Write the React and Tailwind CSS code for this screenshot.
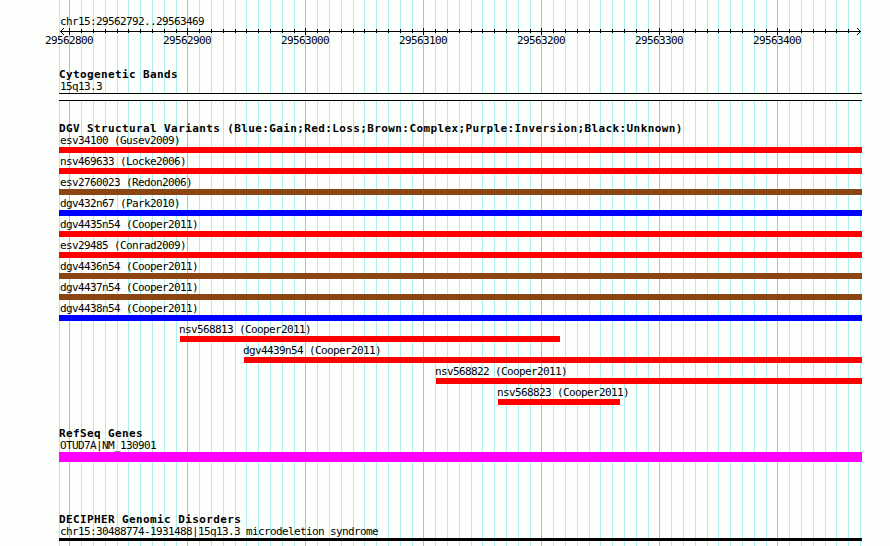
import React from "react";

const LEFT = 59;
const AXIS_Y = 31;

const MAJOR = [69, 187, 305, 423, 541, 659, 777];
const MINOR_OFFSETS = [12, 24, 36, 48, 59, 71, 83, 95, 107];
const MINOR = MAJOR.flatMap((x) => MINOR_OFFSETS.map((o) => x + o)).filter((x) => x <= 860);

const POSITIONS = ["29562800", "29562900", "29563000", "29563100", "29563200", "29563300", "29563400"];

const VARIANTS = [
  { name: "esv34100 (Gusev2009)", start: 59, end: 862, color: "bg-[#ff0000]" },
  { name: "nsv469633 (Locke2006)", start: 59, end: 862, color: "bg-[#ff0000]" },
  { name: "esv2760023 (Redon2006)", start: 59, end: 862, color: "bg-[#8b4513]" },
  { name: "dgv432n67 (Park2010)", start: 59, end: 862, color: "bg-[#0000ff]" },
  { name: "dgv4435n54 (Cooper2011)", start: 59, end: 862, color: "bg-[#ff0000]" },
  { name: "esv29485 (Conrad2009)", start: 59, end: 862, color: "bg-[#ff0000]" },
  { name: "dgv4436n54 (Cooper2011)", start: 59, end: 862, color: "bg-[#8b4513]" },
  { name: "dgv4437n54 (Cooper2011)", start: 59, end: 862, color: "bg-[#8b4513]" },
  { name: "dgv4438n54 (Cooper2011)", start: 59, end: 862, color: "bg-[#0000ff]" },
  { name: "nsv568813 (Cooper2011)", start: 180, end: 560, color: "bg-[#ff0000]" },
  { name: "dgv4439n54 (Cooper2011)", start: 244, end: 862, color: "bg-[#ff0000]" },
  { name: "nsv568822 (Cooper2011)", start: 436, end: 862, color: "bg-[#ff0000]" },
  { name: "nsv568823 (Cooper2011)", start: 498, end: 620, color: "bg-[#ff0000]" },
];

/* ---- Grid lines behind every track ---- */
const Grid = () => (
  <svg className="absolute inset-0" width="890" height="546" shapeRendering="crispEdges">
    {[LEFT, ...MINOR].map((x) => (
      <rect key={x} x={x} y="0" width="1" height="546" fill="#afeeee" />
    ))}
    {MAJOR.map((x) => (
      <rect key={x} x={x} y="0" width="1" height="546" fill="#87ceeb" />
    ))}
  </svg>
);

/* ---- Ruler with arrows and ticks ---- */
const Ruler = () => (
  <svg className="absolute inset-0" width="890" height="40" shapeRendering="crispEdges">
    <rect x="60" y={AXIS_Y} width="801" height="1" />
    {MINOR.filter((x) => x < 860).map((x) => (
      <rect key={x} x={x} y={AXIS_Y - 2} width="1" height="4" />
    ))}
    {MAJOR.map((x) => (
      <rect key={x} x={x} y={AXIS_Y - 3} width="1" height="7" />
    ))}
    {[1, 2, 3].map((i) => (
      <g key={i}>
        <rect x={60 + i} y={AXIS_Y - i} width="1" height="1" />
        <rect x={60 + i} y={AXIS_Y + i} width="1" height="1" />
        <rect x={860 - i} y={AXIS_Y - i} width="1" height="1" />
        <rect x={860 - i} y={AXIS_Y + i} width="1" height="1" />
      </g>
    ))}
  </svg>
);

const TrackTitle = ({ children }) => (
  <h2 className="h-3 font-bold tracking-[0.385px] whitespace-pre">{children}</h2>
);

const Label = ({ children }) => (
  <div className="ml-px h-3 mb-0.5 whitespace-pre">{children}</div>
);

const VariantRow = ({ item }) => {
  const offset = item.start - LEFT;
  return (
    <div>
      <div className="h-3 mb-0.5 whitespace-pre" style={{ paddingLeft: offset === 0 ? 1 : offset - 1 }}>
        {item.name}
      </div>
      <div className={`h-1.5 ${item.color}`} style={{ marginLeft: offset, width: item.end - item.start }} />
    </div>
  );
};

const App = () => {
  return (
    <div className="relative w-[890px] h-[546px] overflow-hidden bg-[#fdfffd] text-black font-['DejaVu_Sans_Mono',monospace] text-[11px] leading-[16px] tracking-[-0.622px]">
      <Grid />
      <Ruler />

      <main className="relative pl-[59px] w-[862px]">
        {/* Scale */}
        <header className="h-[67px] pt-[14px]">
          <div className="ml-px h-3">chr15:29562792..29563469</div>
          <div className="mt-[7px] -ml-[49px] flex">
            {POSITIONS.map((p) => (
              <span key={p} className="w-[118px] shrink-0 text-center">
                {p}
              </span>
            ))}
          </div>
        </header>

        <section className="h-[54px]">
          <TrackTitle>Cytogenetic Bands</TrackTitle>
          <Label>15q13.3</Label>
          <div className="h-2 border-y border-black bg-[#fdfffd]" />
        </section>

        <section className="h-[305px]">
          <TrackTitle>DGV Structural Variants (Blue:Gain;Red:Loss;Brown:Complex;Purple:Inversion;Black:Unknown)</TrackTitle>
          <div className="flex flex-col gap-px">
            {VARIANTS.map((v) => (
              <VariantRow key={v.name} item={v} />
            ))}
          </div>
        </section>

        <section className="h-[86px]">
          <TrackTitle>RefSeq Genes</TrackTitle>
          <Label>OTUD7A|NM_130901</Label>
          <div className="h-2.5 bg-[#ff00ff]" />
        </section>

        <section>
          <TrackTitle>DECIPHER Genomic Disorders</TrackTitle>
          <Label>chr15:30488774-1931488|15q13.3 microdeletion syndrome</Label>
          <div className="h-[3px] bg-black" />
        </section>
      </main>
    </div>
  );
};

export default App;
